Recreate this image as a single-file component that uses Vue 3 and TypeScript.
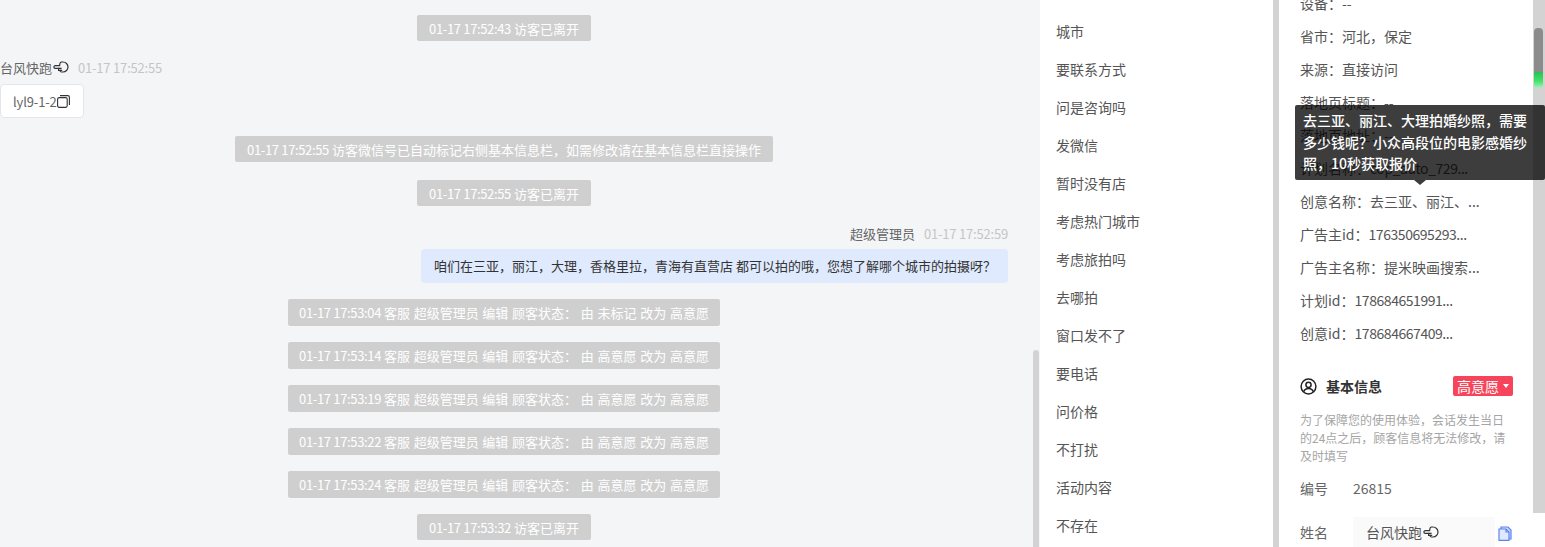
<script setup lang="ts">
type ChatItem =
  | { kind: 'notice'; time: string; text: string; gap: number; wide?: boolean }
  | { kind: 'visitor'; gap: number }
  | { kind: 'agent'; gap: number }

const stamp = '客服 超级管理员 编辑 顾客状态：'
const chat: ChatItem[] = [
  { kind: 'notice', time: '01-17 17:52:43', text: '访客已离开', gap: 15 },
  { kind: 'visitor', gap: 18 },
  { kind: 'notice', time: '01-17 17:52:55', text: '访客微信号已自动标记右侧基本信息栏，如需修改请在基本信息栏直接操作', gap: 18 },
  { kind: 'notice', time: '01-17 17:52:55', text: '访客已离开', gap: 18 },
  { kind: 'agent', gap: 19 },
  { kind: 'notice', time: '01-17 17:53:04', text: `${stamp} 由 未标记 改为 高意愿`, gap: 16, wide: true },
  { kind: 'notice', time: '01-17 17:53:14', text: `${stamp} 由 高意愿 改为 高意愿`, gap: 16, wide: true },
  { kind: 'notice', time: '01-17 17:53:19', text: `${stamp} 由 高意愿 改为 高意愿`, gap: 16, wide: true },
  { kind: 'notice', time: '01-17 17:53:22', text: `${stamp} 由 高意愿 改为 高意愿`, gap: 16, wide: true },
  { kind: 'notice', time: '01-17 17:53:24', text: `${stamp} 由 高意愿 改为 高意愿`, gap: 16, wide: true },
  { kind: 'notice', time: '01-17 17:53:32', text: '访客已离开', gap: 16 },
]
const tags = ['城市', '要联系方式', '问是咨询吗', '发微信', '暂时没有店', '考虑热门城市', '考虑旅拍吗', '去哪拍', '窗口发不了', '要电话', '问价格', '不打扰', '活动内容', '不存在']
const fields: { label: string; value: string; tight?: boolean }[] = [
  { label: '设备：', value: '--' },
  { label: '省市：', value: '河北，保定' },
  { label: '来源：', value: '直接访问' },
  { label: '落地页标题：', value: '--' },
  { label: '落地页地址：', value: '--' },
  { label: '计划名称：', value: 'cop_auto_729...', tight: true },
  { label: '创意名称：', value: '去三亚、丽江、...' },
  { label: '广告主id：', value: '176350695293...', tight: true },
  { label: '广告主名称：', value: '提米映画搜索...' },
  { label: '计划id：', value: '178684651991...', tight: true },
  { label: '创意id：', value: '178684667409...', tight: true },
]
</script>

<template>
  <div class="page">
    <main class="chat">
      <template v-for="(item, i) in chat" :key="i">
        <div v-if="item.kind === 'notice'" class="notice-row" :style="{ marginTop: item.gap + 'px' }">
          <span class="notice" :class="{ wide: item.wide }"><span class="ntime">{{ item.time }}</span> <span class="ntext">{{ item.text }}</span></span>
        </div>
        <div v-else-if="item.kind === 'visitor'" class="msg" :style="{ marginTop: item.gap + 'px' }">
          <div class="meta">
            <span class="who">台风快跑</span>
            <svg class="hand" viewBox="0 0 16 16" width="16" height="16" fill="none" stroke="#333" stroke-width="1.2"><path d="M8.500 3h1.500a5 5 0 0 1 0 10H8.500c-1 0-1.500-.8-1.300-1.700H5.600V9.300H2.200a1.300 1.300 0 0 1 0-2.600h4.400c.1-1.900 .9-3.700 1.900-3.700z" /><path d="M5.600 9.300h3M7.200 11.300h2" /></svg>
            <span class="time">01-17 17:52:55</span>
          </div>
          <div class="card"><span class="cardtext">lyl9-1-2</span><svg viewBox="0 0 13 13" width="13" height="13" fill="none" stroke="#333" stroke-width="1.1"><rect x=".6" y="2.600" width="9.600" height="9.800" rx="1.600" /><path d="M3 .6h7.800a1.600 1.600 0 0 1 1.600 1.600V10" /></svg></div>
        </div>
        <div v-else class="msg mine" :style="{ marginTop: item.gap + 'px' }">
          <div class="meta">
            <span class="who">超级管理员</span>
            <span class="time">01-17 17:52:59</span>
          </div>
          <div class="bubble">咱们在三亚，丽江，大理，香格里拉，青海有直营店 都可以拍的哦，您想了解哪个城市的拍摄呀？</div>
        </div>
      </template>
    </main>
    <div class="track"><div class="thumb"></div></div>
    <section class="tags">
      <div v-for="t in tags" :key="t" class="tag">{{ t }}</div>
    </section>
    <div class="divider"></div>
    <aside class="side">
      <div class="fields">
        <div v-for="f in fields" :key="f.label" class="field">{{ f.label }}<span :class="{ tight: f.tight }">{{ f.value }}</span></div>
      </div>
      <div class="head">
        <svg viewBox="0 0 17 17" width="17" height="17" fill="none" stroke="#222" stroke-width="1.5"><circle cx="8.500" cy="8.500" r="7.400" /><circle cx="8.500" cy="6.800" r="2.600" /><path d="M3.700 13.800c.8-2.300 2.600-3.200 4.800-3.200s4 .9 4.800 3.200" /></svg>
        <span class="title">基本信息</span>
        <span class="level">高意愿<i class="caret"></i></span>
      </div>
      <p class="hint">为了保障您的使用体验，会话发生当日的24点之后，顾客信息将无法修改，请及时填写</p>
      <div class="line"><span class="label">编号</span><span class="num">26815</span></div>
      <div class="line name">
        <span class="label">姓名</span>
        <span class="input">台风快跑<svg class="hand" viewBox="0 0 16 16" width="16" height="16" fill="none" stroke="#333" stroke-width="1.2"><path d="M8.500 3h1.500a5 5 0 0 1 0 10H8.500c-1 0-1.500-.8-1.300-1.700H5.600V9.300H2.200a1.300 1.300 0 0 1 0-2.600h4.400c.1-1.900 .9-3.700 1.900-3.700z" /><path d="M5.600 9.300h3M7.200 11.300h2" /></svg></span>
        <svg class="doc" viewBox="0 0 14 15" width="14" height="15" stroke="#5b84ee" stroke-width="1.200"><path d="M3 3V1h7l3 3v9h-2" fill="#cfdcfb" /><path d="M1 3h7l3 3v8.400H1z" fill="#dfe8fd" /><path d="M8 3v3h3" fill="none" /></svg>
      </div>
      <div class="gutter"><div class="gutter-thumb"></div></div>
    </aside>
    <div class="tooltip">去三亚、丽江、大理拍婚纱照，需要多少钱呢？小众高段位的电影感婚纱照，10秒获取报价</div>
  </div>
</template>

<style scoped>
.page {
  position: relative;
  display: flex;
  width: 1545px;
  height: 547px;
  overflow: hidden;
  background: #f4f5f7;
  font-family: "Noto Sans CJK SC", "Noto Sans", sans-serif;
  font-size: 13px;
  color: #333;
}
.chat {
  width: 1033px;
  flex: none;
  box-sizing: border-box;
  padding-right: 25px;
}
.notice-row { display: flex; justify-content: center; }
.notice {
  height: 26px;
  line-height: 27px;
  padding: 0 12px;
  background: #cfcfcf;
  color: #fff;
  border-radius: 2px;
  white-space: nowrap;
}
.notice.wide { height: 27px; padding: 0 11px; }
.ntime { letter-spacing: -.35px; }
.ntext { word-spacing: .8px; }
.msg { display: flex; flex-direction: column; align-items: flex-start; }
.msg.mine { align-items: flex-end; }
.meta { display: flex; align-items: center; height: 16px; }
.who { color: #666; }
.hand { margin-left: 1px; flex: none; }
.time { color: #c5c5c5; margin-left: 9px; letter-spacing: -.2px; }
.card {
  display: flex;
  align-items: center;
  height: 34px;
  box-sizing: border-box;
  margin-top: 9px;
  padding: 0 13px 0 12px;
  background: #fff;
  border: 1px solid #e4e6ea;
  border-radius: 4px;
  color: #666;
}
.cardtext { letter-spacing: -.15px; }
.bubble {
  margin-top: 8px;
  height: 34px;
  line-height: 34px;
  padding: 0 12px 0 13px;
  background: #dfeafe;
  border-radius: 4px;
  color: #333;
  white-space: nowrap;
}
.track { position: relative; width: 7px; flex: none; }
.thumb {
  position: absolute;
  left: 0;
  top: 350px;
  width: 6px;
  height: 197px;
  border-radius: 3px 3px 0 0;
  background: #d3d3d3;
}
.tags {
  width: 233px;
  flex: none;
  box-sizing: border-box;
  padding: 12px 0 0 16px;
  background: #fff;
  font-size: 14px;
}
.tag { height: 38px; line-height: 38px; color: #555; }
.divider { width: 6px; flex: none; background: #d3d3d3; }
.side {
  position: relative;
  width: 266px;
  flex: none;
  box-sizing: border-box;
  padding: 0 0 0 21px;
  background: #fff;
  font-size: 14px;
}
.fields { margin-top: -13px; }
.field { height: 33px; line-height: 33px; color: #555; white-space: nowrap; }
.tight { letter-spacing: -.45px; }
.head { display: flex; align-items: center; margin-top: 23px; height: 26px; width: 213px; }
.title { margin-left: 9px; font-weight: 700; color: #333; }
.level {
  margin-left: auto;
  display: flex;
  align-items: center;
  height: 20px;
  padding: 0 4px;
  background: #f6455a;
  color: #fff;
  border-radius: 2px;
}
.caret {
  margin-left: 4px;
  border: 3px solid transparent;
  border-top: 4px solid #fff;
  border-bottom: 0;
}
.hint { margin: 12px 0 0; width: 212px; line-height: 18px; font-size: 12px; color: #a5a5a5; }
.line { display: flex; align-items: center; height: 20px; margin-top: 13px; color: #666; }
.label { width: 53px; flex: none; }
.name { margin-top: 19px; height: 32px; }
.name .label { padding-bottom: 2px; }
.input {
  display: flex;
  align-items: center;
  width: 142px;
  height: 32px;
  flex: none;
  box-sizing: border-box;
  padding: 0 0 2px 13px;
  background: #fafafa;
  color: #555;
}
.doc { margin-left: 3px; flex: none; }
.gutter {
  position: absolute;
  left: 254px;
  top: 0;
  width: 12px;
  height: 513px;
  background: #d3d3d3;
}
.gutter-thumb {
  position: absolute;
  left: 1px;
  top: 28px;
  width: 9px;
  height: 60px;
  border-radius: 4px;
  background: linear-gradient(#8c8c8c 0 73%, #2fbf57 74%, #3fe467 88%, #a6efba);
}
.tooltip {
  position: absolute;
  left: 1295px;
  top: 105px;
  width: 250px;
  height: 75px;
  box-sizing: border-box;
  padding: 5px 8px;
  line-height: 21.500px;
  font-size: 14px;
  font-weight: 500;
  color: #fff;
  background: rgba(0, 0, 0, .76);
  border-radius: 2px;
}
.tooltip::after {
  content: "";
  position: absolute;
  left: 119px;
  top: 75px;
  border: 6px solid transparent;
  border-top: 5px solid rgba(0, 0, 0, .76);
  border-bottom: 0;
}
</style>
